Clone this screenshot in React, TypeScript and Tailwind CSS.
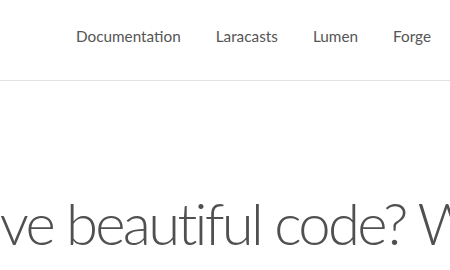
export default function App() {
  const links = ['Documentation', 'Laracasts', 'Lumen', 'Forge'];
  return (
    <div className="w-[450px] h-[270px] overflow-hidden bg-white" style={{ fontFamily: 'Lato, "Open Sans", sans-serif' }}>
      <nav className="h-[81px] border-b border-[#e2e2e2] flex items-center justify-end pr-[19px]">
        <ul className="flex gap-[35px] text-[15.3px] text-[#555] pb-[8px]">
          {links.map((l) => (
            <li key={l}>{l}</li>
          ))}
        </ul>
      </nav>
      <div className="pt-[113px]">
        <h1 className="whitespace-nowrap text-[58px] font-light text-[#505050] leading-none ml-[-53px] tracking-[-2.7px]">
          Love beautiful code? We do too.
        </h1>
      </div>
    </div>
  );
}
